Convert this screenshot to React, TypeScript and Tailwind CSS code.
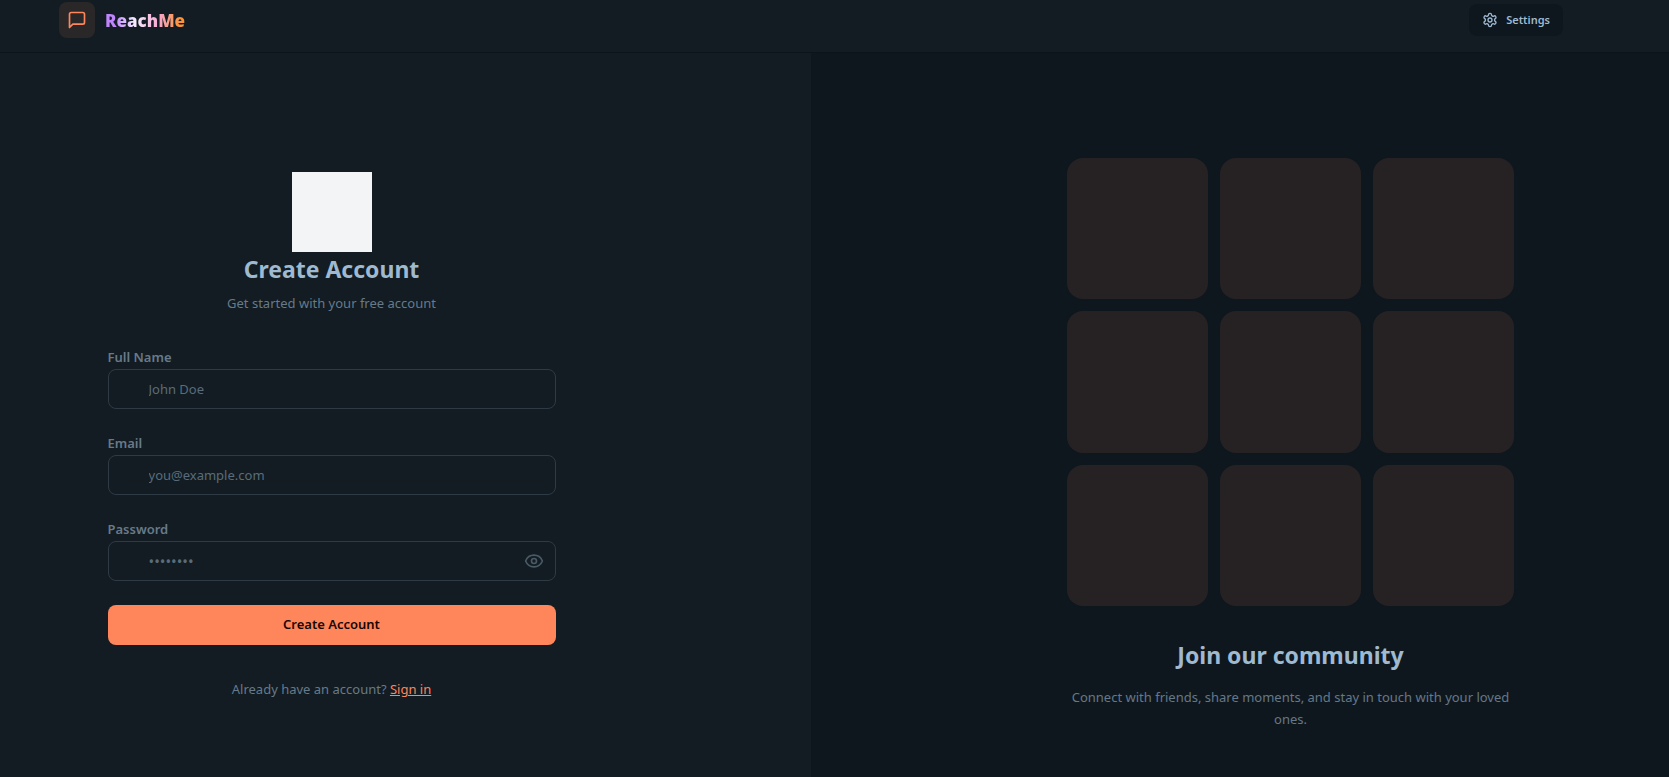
import { useState } from 'react';
import type { ReactNode } from 'react';

function MessageIcon() {
  return (
    <svg viewBox="0 0 24 24" className="size-5" fill="none" stroke="currentColor" strokeWidth="2" strokeLinecap="round" strokeLinejoin="round" aria-hidden="true">
      <path d="M21 15a2 2 0 0 1-2 2H7l-4 4V5a2 2 0 0 1 2-2h14a2 2 0 0 1 2 2z" />
    </svg>
  );
}

function GearIcon() {
  return (
    <svg viewBox="0 0 24 24" className="size-4" fill="none" stroke="currentColor" strokeWidth="2" strokeLinecap="round" strokeLinejoin="round" aria-hidden="true">
      <path d="M12.22 2h-.44a2 2 0 0 0-2 2v.18a2 2 0 0 1-1 1.73l-.43.25a2 2 0 0 1-2 0l-.15-.08a2 2 0 0 0-2.73.73l-.22.38a2 2 0 0 0 .73 2.73l.15.1a2 2 0 0 1 1 1.72v.51a2 2 0 0 1-1 1.74l-.15.09a2 2 0 0 0-.73 2.73l.22.38a2 2 0 0 0 2.73.73l.15-.08a2 2 0 0 1 2 0l.43.25a2 2 0 0 1 1 1.73V20a2 2 0 0 0 2 2h.44a2 2 0 0 0 2-2v-.18a2 2 0 0 1 1-1.73l.43-.25a2 2 0 0 1 2 0l.15.08a2 2 0 0 0 2.73-.73l.22-.39a2 2 0 0 0-.73-2.73l-.15-.08a2 2 0 0 1-1-1.74v-.5a2 2 0 0 1 1-1.74l.15-.09a2 2 0 0 0 .73-2.73l-.22-.38a2 2 0 0 0-2.73-.73l-.15.08a2 2 0 0 1-2 0l-.43-.25a2 2 0 0 1-1-1.73V4a2 2 0 0 0-2-2z" />
      <circle cx="12" cy="12" r="3" />
    </svg>
  );
}

function EyeIcon() {
  return (
    <svg viewBox="0 0 24 24" className="size-5" fill="none" stroke="currentColor" strokeWidth="2" strokeLinecap="round" strokeLinejoin="round" aria-hidden="true">
      <path d="M2.062 12.348a1 1 0 0 1 0-.696 10.75 10.75 0 0 1 19.876 0 1 1 0 0 1 0 .696 10.75 10.75 0 0 1-19.876 0" />
      <circle cx="12" cy="12" r="3" />
    </svg>
  );
}

type FieldProps = { id: string; label: string; type: string; placeholder: string; children?: ReactNode };

function Field({ id, label, type, placeholder, children }: FieldProps) {
  return (
    <div className="flex flex-col gap-0.5">
      <label htmlFor={id} className="text-[13px] leading-5 font-semibold text-[#677a8a]">
        {label}
      </label>
      <div className="relative">
        <input
          id={id}
          type={type}
          placeholder={placeholder}
          className={`block h-10 w-full rounded-lg border border-[#2e3b45] bg-[#121c22] pr-10 pl-10 text-[#9fb9d0] outline-none placeholder:text-[#5a6c7a] ${id === 'password' ? 'text-[15px]' : 'text-[13px]'}`}
        />
        {children}
      </div>
    </div>
  );
}

export default function App() {
  const [visible, setVisible] = useState(false);
  return (
    <div className="flex min-h-screen flex-col bg-[#0e171e] font-['Noto_Sans',sans-serif] text-[#9fb9d0]">
      <header className="h-[53px] border-b border-[#0a141a] bg-[#121c22] pt-0.5 pr-[106px] pl-[59px]">
        <div className="flex h-9 items-center justify-between">
          <a href="#" className="flex items-center gap-2.5">
            <span className="flex size-9 items-center justify-center rounded-lg bg-[#2a2728] text-[#ff865b]">
              <MessageIcon />
            </span>
            <span className="bg-[linear-gradient(to_right,#c084fc_12%,#f5edff_38%,#f9a8d4_66%,#fb923c_92%)] bg-clip-text pt-0.5 text-[17px] leading-7 font-black text-transparent">
              ReachMe
            </span>
          </a>
          <button type="button" className="flex h-8 items-center gap-2 rounded-lg bg-[#0e171e] px-[13px] text-[11px] font-semibold">
            <GearIcon />
            Settings
          </button>
        </div>
      </header>

      <main className="grid flex-1 grid-cols-[811fr_858fr]">
        <section className="flex flex-col items-center bg-[#121c22] pt-[119px] pr-[148px]">
          <div className="w-full max-w-md">
            <div className="flex flex-col items-center">
              <div className="size-20 bg-gray-100" />
              <h1 className="mt-px text-[23px] leading-8 font-bold">Create Account</h1>
              <p className="mt-2 text-[13px] leading-5 text-[#677a8a]">Get started with your free account</p>
            </div>
            <form className="mt-[34px] flex flex-col gap-6" onSubmit={(e) => e.preventDefault()}>
              <Field id="name" label="Full Name" type="text" placeholder="John Doe" />
              <Field id="email" label="Email" type="email" placeholder="you@example.com" />
              <Field id="password" label="Password" type={visible ? 'text' : 'password'} placeholder="••••••••">
                <button
                  type="button"
                  aria-label="Toggle password visibility"
                  onClick={() => setVisible(!visible)}
                  className="absolute inset-y-0 right-0 flex items-center pr-3 text-[#4a5a66]"
                >
                  <EyeIcon />
                </button>
              </Field>
              <button type="submit" className="h-10 rounded-lg bg-[#ff865b] text-[13px] font-semibold text-[#160603]">
                Create Account
              </button>
            </form>
            <p className="mt-8 text-center text-[13px] leading-6 text-[#677a8a]">
              Already have an account?{' '}
              <a href="#" className="text-[#ff865b] underline">
                Sign in
              </a>
            </p>
          </div>
        </section>

        <section className="flex flex-col items-center pt-[105px] pl-[101px]">
          <div className="w-full max-w-md text-center">
            <div className="grid grid-cols-3 gap-3">
              {Array.from({ length: 9 }, (_, i) => (
                <div key={i} className="aspect-square rounded-2xl bg-[#262224]" />
              ))}
            </div>
            <h2 className="mt-[33px] text-[23px] leading-8 font-bold">Join our community</h2>
            <p className="mt-[15px] text-[13px] leading-[22px] text-[#657889]">
              Connect with friends, share moments, and stay in touch with your loved ones.
            </p>
          </div>
        </section>
      </main>
    </div>
  );
}
